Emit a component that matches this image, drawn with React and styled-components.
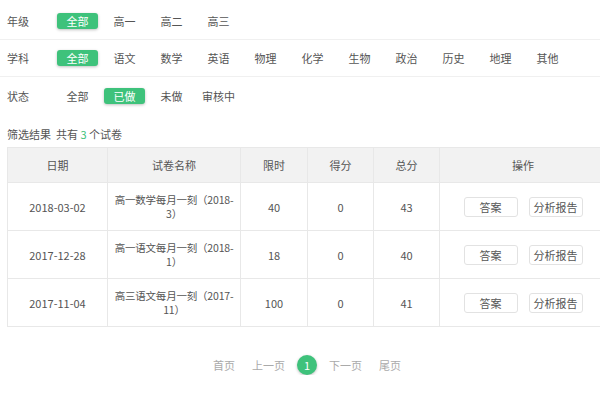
import React from "react";
import styled, { createGlobalStyle } from "styled-components";

const GREEN = "#3ec27b";

const GlobalStyle = createGlobalStyle`
  html, body {
    margin: 0;
    padding: 0;
    background: #fff;
    overflow: hidden;
  }
  body {
    font-family: "Noto Sans CJK SC", "Noto Sans", sans-serif;
    font-size: 11px;
    color: #555;
  }
`;

const Page = styled.div`
  width: 600px;
  margin-left: 7px;
  padding-top: 3px;
`;

const FilterRow = styled.div`
  display: flex;
  align-items: center;
  height: 37px;
  margin-left: -7px;
  padding-left: 7px;
  width: 600px;
  border-bottom: ${({ last }) => (last ? "none" : "1px solid #f0f0f0")};
  box-sizing: border-box;
`;

const FilterLabel = styled.div`
  width: 50px;
  flex-shrink: 0;
  color: #555;
`;

const FilterItem = styled.div`
  width: 41px;
  height: 16px;
  margin-right: 6px;
  display: flex;
  align-items: center;
  justify-content: center;
  border-radius: 3px;
  white-space: nowrap;
  color: ${({ active }) => (active ? "#fff" : "#555")};
  background: ${({ active }) => (active ? GREEN : "transparent")};
  box-shadow: ${({ active }) =>
    active ? "0 1px 3px rgba(0, 0, 0, 0.25)" : "none"};
`;

const Result = styled.div`
  margin-top: 10px;
  height: 20px;
  line-height: 20px;
  color: #555;
`;

const Count = styled.span`
  color: ${GREEN};
`;

const Table = styled.table`
  width: 600px;
  border-collapse: collapse;
  table-layout: fixed;
  margin-top: 3px;
`;

const Th = styled.th`
  height: 34px;
  padding: 0;
  line-height: 14px;
  background: #f2f2f2;
  font-weight: normal;
  color: #555;
  border: 1px solid #e8e8e8;
  text-align: center;
`;

const Td = styled.td`
  height: 47px;
  border: 1px solid #e8e8e8;
  text-align: center;
  color: #555;
  line-height: 14px;
  padding: 0 4px;
`;

const NameLine = styled.span`
  display: block;
  white-space: nowrap;
  font-size: 10.5px;
  letter-spacing: -0.2px;
`;

const Ops = styled.div`
  display: flex;
  justify-content: center;
  gap: 11px;
`;

const OpButton = styled.div`
  width: 54px;
  height: 20px;
  box-sizing: border-box;
  border: 1px solid #e2e2e2;
  border-radius: 3px;
  display: flex;
  align-items: center;
  justify-content: center;
  color: #555;
  background: #fff;
`;

const Pager = styled.div`
  display: flex;
  justify-content: center;
  align-items: center;
  gap: 12px;
  margin-top: 28px;
  color: #aaa;
`;

const PageLink = styled.span`
  margin: 0 ${({ edge }) => (edge ? "5px" : "0")};
`;

const PageNum = styled.span`
  width: 20px;
  height: 20px;
  border-radius: 50%;
  background: ${GREEN};
  color: #fff;
  display: flex;
  align-items: center;
  justify-content: center;
  box-shadow: 0 1px 3px rgba(0, 0, 0, 0.25);
`;

const grades = ["全部", "高一", "高二", "高三"];
const subjects = [
  "全部", "语文", "数学", "英语", "物理", "化学",
  "生物", "政治", "历史", "地理", "其他",
];
const states = ["全部", "已做", "未做", "审核中"];

const rows = [
  { date: "2018-03-02", name: ["高一数学每月一刻（2018-", "3）"], time: 40, score: 0, total: 43 },
  { date: "2017-12-28", name: ["高一语文每月一刻（2018-", "1）"], time: 18, score: 0, total: 40 },
  { date: "2017-11-04", name: ["高三语文每月一刻（2017-", "11）"], time: 100, score: 0, total: 41 },
];

const Filter = ({ label, items, active, last }) => (
  <FilterRow last={last}>
    <FilterLabel>{label}</FilterLabel>
    {items.map((it, i) => (
      <FilterItem key={it} active={i === active}>
        {it}
      </FilterItem>
    ))}
  </FilterRow>
);

export default function App() {
  return (
    <Page>
      <GlobalStyle />
      <Filter label="年级" items={grades} active={0} />
      <Filter label="学科" items={subjects} active={0} />
      <Filter label="状态" items={states} active={1} last />

      <Result>
        筛选结果 &nbsp;共有 <Count>3</Count> 个试卷
      </Result>

      <Table>
        <colgroup>
          <col style={{ width: 100 }} />
          <col style={{ width: 133 }} />
          <col style={{ width: 67 }} />
          <col style={{ width: 66 }} />
          <col style={{ width: 66 }} />
          <col />
        </colgroup>
        <thead>
          <tr>
            <Th>日期</Th>
            <Th>试卷名称</Th>
            <Th>限时</Th>
            <Th>得分</Th>
            <Th>总分</Th>
            <Th>操作</Th>
          </tr>
        </thead>
        <tbody>
          {rows.map((r) => (
            <tr key={r.date}>
              <Td>{r.date}</Td>
              <Td>
                {r.name.map((line) => (
                  <NameLine key={line}>{line}</NameLine>
                ))}
              </Td>
              <Td>{r.time}</Td>
              <Td>{r.score}</Td>
              <Td>{r.total}</Td>
              <Td>
                <Ops>
                  <OpButton>答案</OpButton>
                  <OpButton>分析报告</OpButton>
                </Ops>
              </Td>
            </tr>
          ))}
        </tbody>
      </Table>

      <Pager>
        <PageLink edge>首页</PageLink>
        <PageLink>上一页</PageLink>
        <PageNum>1</PageNum>
        <PageLink>下一页</PageLink>
        <PageLink edge>尾页</PageLink>
      </Pager>
    </Page>
  );
}
